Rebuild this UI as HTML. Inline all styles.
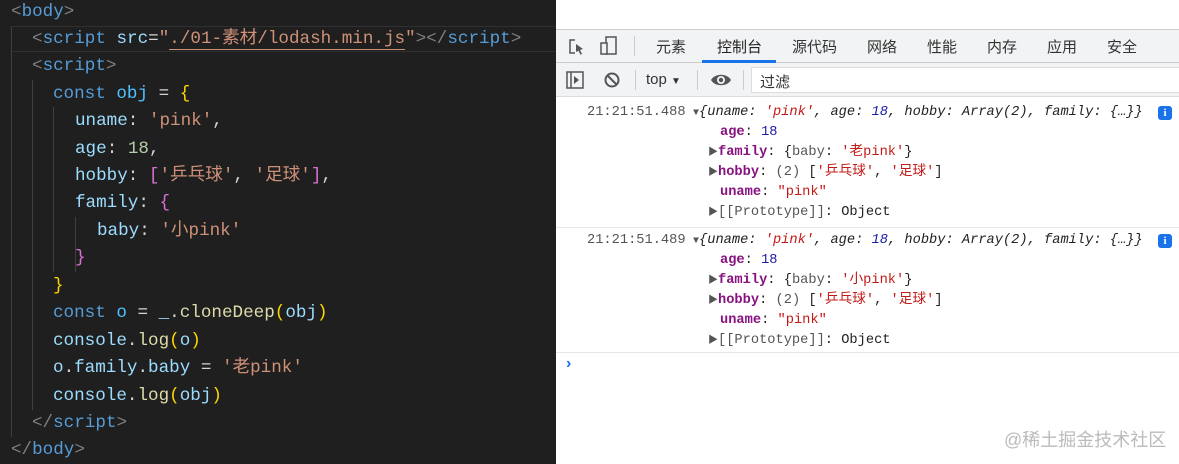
<!DOCTYPE html>
<html><head><meta charset="utf-8"><style>
*{margin:0;padding:0;box-sizing:border-box}
body{width:1179px;height:464px;overflow:hidden;position:relative;background:#fff;font-family:"Liberation Sans","Noto Sans CJK SC",sans-serif}
#ed{position:absolute;left:0;top:0;width:556px;height:464px;background:#1f1f1f;font-family:"Liberation Mono","Noto Sans CJK SC",monospace;font-size:17.6px;color:#d4d4d4}
.l{position:absolute;height:27px;line-height:27px;white-space:pre}
.g{color:#808080}.t{color:#569cd6}.a{color:#9cdcfe}.s{color:#ce9178}.k{color:#569cd6}.v{color:#4fc1ff}.y{color:#ffd700}.p{color:#da70d6}.n{color:#b5cea8}.f{color:#dcdcaa}
.guide{position:absolute;width:1px;background:#404040}
#dt{position:absolute;left:556px;top:0;width:623px;height:464px;background:#fff}
.tab{position:absolute;top:36px;font-size:15px;color:#333}
.cl{position:absolute;font-family:"Liberation Mono","Noto Sans CJK SC",monospace;font-size:13.7px;white-space:pre;line-height:20px;color:#222}
.pk{color:#881280;font-weight:bold}.sn{color:#1a1aa6}.ss{color:#c41a16}.gr{color:#555}.it{font-style:italic}
.tri{color:#555;font-size:10px}
</style></head><body>
<div id="ed">
<div class="guide" style="left:11px;top:27px;height:410px"></div>
<div class="guide" style="left:32px;top:80px;height:330px"></div>
<div class="guide" style="left:53px;top:107px;height:165px"></div>
<div class="guide" style="left:75px;top:217px;height:55px"></div>
<div style="position:absolute;left:10px;top:26px;width:546px;height:26px;border:1px solid #303030;border-left:none;border-right:none"></div>
<div class="l" style="left:11px;top:-1px"><span class="g">&lt;</span><span class="t">body</span><span class="g">&gt;</span></div>
<div class="l" style="left:32px;top:26px"><span class="g">&lt;</span><span class="t">script</span> <span class="a">src</span>=<span class="s">"<span style="border-bottom:1px solid #ce9178">./01-素材/lodash.min.js</span>"</span><span class="g">&gt;&lt;/</span><span class="t">script</span><span class="g">&gt;</span></div>
<div class="l" style="left:32px;top:53px"><span class="g">&lt;</span><span class="t">script</span><span class="g">&gt;</span></div>
<div class="l" style="left:53px;top:81px"><span class="k">const</span> <span class="v">obj</span> = <span class="y">{</span></div>
<div class="l" style="left:75px;top:108px"><span class="a">uname</span>: <span class="s">'pink'</span>,</div>
<div class="l" style="left:75px;top:136px"><span class="a">age</span>: <span class="n">18</span>,</div>
<div class="l" style="left:75px;top:163px"><span class="a">hobby</span>: <span class="p">[</span><span class="s">'乒乓球'</span>, <span class="s">'足球'</span><span class="p">]</span>,</div>
<div class="l" style="left:75px;top:190px"><span class="a">family</span>: <span class="p">{</span></div>
<div class="l" style="left:97px;top:218px"><span class="a">baby</span>: <span class="s">'小pink'</span></div>
<div class="l" style="left:75px;top:245px"><span class="p">}</span></div>
<div class="l" style="left:53px;top:273px"><span class="y">}</span></div>
<div class="l" style="left:53px;top:300px"><span class="k">const</span> <span class="v">o</span> = <span class="a">_</span>.<span class="f">cloneDeep</span><span class="y">(</span><span class="a">obj</span><span class="y">)</span></div>
<div class="l" style="left:53px;top:328px"><span class="a">console</span>.<span class="f">log</span><span class="y">(</span><span class="a">o</span><span class="y">)</span></div>
<div class="l" style="left:53px;top:355px"><span class="a">o</span>.<span class="a">family</span>.<span class="a">baby</span> = <span class="s">'老pink'</span></div>
<div class="l" style="left:53px;top:383px"><span class="a">console</span>.<span class="f">log</span><span class="y">(</span><span class="a">obj</span><span class="y">)</span></div>
<div class="l" style="left:32px;top:410px"><span class="g">&lt;/</span><span class="t">script</span><span class="g">&gt;</span></div>
<div class="l" style="left:11px;top:437px"><span class="g">&lt;/</span><span class="t">body</span><span class="g">&gt;</span></div>
</div>
<div id="dt">
<div style="position:absolute;left:0;top:29px;width:623px;height:34px;background:#f1f3f4;border-top:1px solid #ccc;border-bottom:1px solid #ccc"></div>
<svg style="position:absolute;left:12px;top:38px" width="18" height="18" viewBox="0 0 18 18"><path d="M7 2H2v13h5" fill="none" stroke="#555" stroke-width="1.5"/><path d="M8 6l7 5-3 1 2 4-1.5 .7-2-4L8 14z" fill="#555"/></svg>
<svg style="position:absolute;left:44px;top:36px" width="18" height="20" viewBox="0 0 18 20"><rect x="6" y="1" width="10" height="17" fill="none" stroke="#555" stroke-width="1.5"/><rect x="1" y="7" width="6" height="11" fill="#f1f3f4" stroke="#555" stroke-width="1.5"/></svg>
<div style="position:absolute;left:78px;top:36px;width:1px;height:20px;background:#ccc"></div>
<div class="tab" style="left:100px">元素</div>
<div class="tab" style="left:161px;color:#222">控制台</div>
<div style="position:absolute;left:146px;top:60px;width:74px;height:3px;background:#1a73e8"></div>
<div class="tab" style="left:236px">源代码</div>
<div class="tab" style="left:311px">网络</div>
<div class="tab" style="left:371px">性能</div>
<div class="tab" style="left:431px">内存</div>
<div class="tab" style="left:491px">应用</div>
<div class="tab" style="left:551px">安全</div>
<div style="position:absolute;left:0;top:63px;width:623px;height:34px;background:#f1f3f4;border-bottom:1px solid #ddd"></div>
<svg style="position:absolute;left:10px;top:71px" width="18" height="18" viewBox="0 0 18 18"><rect x="1" y="1" width="16" height="16" fill="none" stroke="#555" stroke-width="1.5"/><line x1="5" y1="1" x2="5" y2="17" stroke="#555" stroke-width="1.5"/><path d="M8 5l5 4-5 4z" fill="#555"/></svg>
<svg style="position:absolute;left:48px;top:72px" width="16" height="16" viewBox="0 0 16 16"><circle cx="8" cy="8" r="6.5" fill="none" stroke="#555" stroke-width="2"/><line x1="3.5" y1="3.5" x2="12.5" y2="12.5" stroke="#555" stroke-width="2"/></svg>
<div style="position:absolute;left:79px;top:70px;width:1px;height:20px;background:#ccc"></div>
<div style="position:absolute;left:90px;top:71px;font-size:15px;color:#333">top <span style="font-size:10px">▼</span></div>
<div style="position:absolute;left:141px;top:70px;width:1px;height:20px;background:#ccc"></div>
<svg style="position:absolute;left:154px;top:72px" width="22" height="16" viewBox="0 0 22 16"><path d="M1 8C5 1 17 1 21 8C17 15 5 15 1 8z" fill="#555"/><circle cx="11" cy="8" r="4" fill="#f1f3f4"/><circle cx="11" cy="8" r="2.2" fill="#555"/></svg>
<div style="position:absolute;left:187px;top:70px;width:1px;height:20px;background:#ccc"></div>
<div style="position:absolute;left:195px;top:67px;width:428px;height:26px;background:#fff;border:1px solid #ddd;border-right:none;font-size:15px;color:#333;padding:3px 0 0 8px">过滤</div>

<div class="cl gr" style="left:31px;top:103px">21:21:51.488</div>
<div class="cl" style="left:137px;top:103px"><span class="tri">▼</span><span class="it">{uname: <span class="ss">'pink'</span>, age: <span class="sn">18</span>, hobby: Array(2), family: {…}}</span></div>
<div style="position:absolute;left:602px;top:106px;width:14px;height:14px;background:#1a73e8;border-radius:3px;color:#fff;font-size:11px;font-weight:bold;text-align:center;line-height:14px;font-family:'Liberation Serif',serif">i</div>
<div class="cl" style="left:164px;top:123px"><span class="pk">age</span>: <span class="sn">18</span></div>
<div class="cl" style="left:152px;top:143px"><span class="tri">▶</span><span class="pk">family</span>: {<span class="gr">baby</span>: <span class="ss">'老pink'</span>}</div>
<div class="cl" style="left:152px;top:163px"><span class="tri">▶</span><span class="pk">hobby</span>: <span class="gr">(2)</span> [<span class="ss">'乒乓球'</span>, <span class="ss">'足球'</span>]</div>
<div class="cl" style="left:164px;top:183px"><span class="pk">uname</span>: <span class="ss">"pink"</span></div>
<div class="cl" style="left:152px;top:203px"><span class="tri">▶</span><span class="gr">[[Prototype]]</span>: Object</div>
<div style="position:absolute;left:0;top:227px;width:623px;height:1px;background:#e6e6e6"></div>

<div class="cl gr" style="left:31px;top:231px">21:21:51.489</div>
<div class="cl" style="left:137px;top:231px"><span class="tri">▼</span><span class="it">{uname: <span class="ss">'pink'</span>, age: <span class="sn">18</span>, hobby: Array(2), family: {…}}</span></div>
<div style="position:absolute;left:602px;top:234px;width:14px;height:14px;background:#1a73e8;border-radius:3px;color:#fff;font-size:11px;font-weight:bold;text-align:center;line-height:14px;font-family:'Liberation Serif',serif">i</div>
<div class="cl" style="left:164px;top:251px"><span class="pk">age</span>: <span class="sn">18</span></div>
<div class="cl" style="left:152px;top:271px"><span class="tri">▶</span><span class="pk">family</span>: {<span class="gr">baby</span>: <span class="ss">'小pink'</span>}</div>
<div class="cl" style="left:152px;top:291px"><span class="tri">▶</span><span class="pk">hobby</span>: <span class="gr">(2)</span> [<span class="ss">'乒乓球'</span>, <span class="ss">'足球'</span>]</div>
<div class="cl" style="left:164px;top:311px"><span class="pk">uname</span>: <span class="ss">"pink"</span></div>
<div class="cl" style="left:152px;top:331px"><span class="tri">▶</span><span class="gr">[[Prototype]]</span>: Object</div>
<div style="position:absolute;left:0;top:352px;width:623px;height:1px;background:#e6e6e6"></div>
<div style="position:absolute;left:10px;top:355px;color:#1a73e8;font-size:16px;font-weight:bold">›</div>
<div style="position:absolute;left:448px;top:426px;color:#bbb;font-size:18px">@稀土掘金技术社区</div>
</div>
</body></html>
